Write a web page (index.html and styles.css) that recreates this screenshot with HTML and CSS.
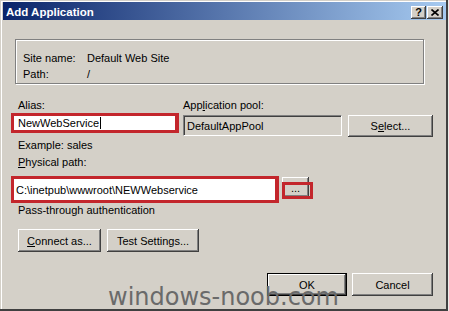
FILE: index.html
```html
<!DOCTYPE html>
<html lang="en">
<head>
  <meta charset="UTF-8">
  <title>Add Application</title>
  <link rel="stylesheet" href="styles.css">
</head>
<body>
  <div class="window">
    <div class="titlebar">
      <span class="title">Add Application</span>
      <div class="title-buttons">
        <span class="tbtn help">?</span>
        <span class="tbtn close">
          <svg width="8" height="7" viewBox="0 0 8 7"><path d="M0.5 0.5 L7.5 6.5 M7.5 0.5 L0.5 6.5" stroke="#000" stroke-width="1.6"/></svg>
        </span>
      </div>
    </div>

    <div class="content">
      <!-- Site info -->
      <div class="group">
        <div class="info">
          <span>Site name:</span><span>Default Web Site</span>
          <span>Path:</span><span>/</span>
        </div>
      </div>

      <div class="app-row">
        <div class="field">
          <div class="label">Alias:</div>
          <div class="textbox marked alias-box">NewWebService<span class="caret"></span></div>
          <div class="label hint">Example: sales</div>
        </div>
        <div class="field">
          <div class="label pool-label">App<u>l</u>ication pool:</div>
          <div class="textbox readonly">DefaultAppPool</div>
        </div>
        <button class="btn select">S<u>e</u>lect...</button>
      </div>

      <div class="label path-label"><u>P</u>hysical path:</div>
      <div class="path-row">
        <div class="textbox marked path-box">C:\inetpub\wwwroot\NEWWebservice</div>
        <button class="btn browse">...</button>
      </div>
      <div class="label pass">Pass-through authentication</div>

      <div class="btn-row">
        <button class="btn connect"><u>C</u>onnect as...</button>
        <button class="btn test">Test Settings...</button>
      </div>

      <div class="footer">
        <button class="btn ok">OK</button>
        <button class="btn cancel">Cancel</button>
      </div>
    </div>

    <div class="watermark">windows-noob.com</div>
  </div>
</body>
</html>
```

FILE: styles.css
```css
body {
  margin: 0;
  background-color: #ecebe8;
  font-family: "Liberation Sans", Arial, sans-serif;
  font-size: 11px;
  color: #000;
}
.window {
  position: relative;
  box-sizing: border-box;
  width: 448px;
  height: 311px;
  padding: 2px 0 0 3px;
  background-color: #d4d0c8;
  border-right: 2px solid #404040;
  border-bottom: 2px solid #404040;
  box-shadow: inset 1px 1px #d4d0c8, inset 2px 2px #fff;
  overflow: hidden;
}
.titlebar {
  display: flex;
  align-items: center;
  justify-content: space-between;
  height: 18px;
  padding: 0 3px;
  background: linear-gradient(to right, #0a246a, #a6caf0);
}
.title {
  color: #fff;
  font-weight: bold;
  font-size: 11.5px;
  margin-top: 1px;
}
.title-buttons {
  display: flex;
  gap: 1px;
  margin-top: 2px;
}
.tbtn {
  display: flex;
  align-items: center;
  justify-content: center;
  width: 15px;
  height: 13px;
  background-color: #d4d0c8;
  box-shadow: inset -1px -1px #404040, inset 1px 1px #fff, inset -2px -2px #808080;
  font-weight: bold;
  font-size: 11px;
}
.tbtn.close {
  width: 16px;
}
.content {
  padding: 0 13px 0 12px;
}
/* Site info group box */
.group {
  margin: 19px 9px 0 0;
  height: 43px;
  border: 1px solid #808080;
  box-shadow: inset 1px 1px #fff, 1px 1px #fff;
}
.info {
  display: grid;
  grid-template-columns: 64px auto;
  grid-auto-rows: 16px;
  align-items: center;
  padding: 10px 0 0 7px;
}
.label {
  height: 16px;
  line-height: 16px;
  padding-left: 3px;
}
.app-row {
  display: grid;
  grid-template-columns: 168px 165px 85px;
  align-items: start;
  margin-top: 13px;
}
.textbox {
  box-sizing: border-box;
  display: flex;
  align-items: center;
  background-color: #fff;
  white-space: nowrap;
}
.marked {
  border: 3px solid #c3262c;
  border-right-width: 4px;
  padding-left: 4px;
  margin-left: -4px;
}
.alias-box {
  width: 168px;
  height: 20px;
}
.caret {
  width: 1px;
  height: 12px;
  margin-left: 1px;
  background-color: #000;
}
.hint {
  margin-top: 4px;
}
.pool-label {
  padding-left: 0;
}
.readonly {
  width: 159px;
  height: 21px;
  margin-top: 2px;
  padding-left: 3px;
  background-color: #d4d0c8;
  border: 1px solid;
  border-color: #808080 #fff #fff #808080;
  box-shadow: inset 1px 1px #404040;
}
.btn {
  box-sizing: border-box;
  padding: 0;
  border: none;
  background-color: #d4d0c8;
  box-shadow: inset -1px -1px #404040, inset 1px 1px #fff, inset -2px -2px #808080;
  font-family: inherit;
  font-size: 11px;
  color: #000;
}
.select {
  width: 85px;
  height: 22px;
  margin-top: 18px;
}
.path-label {
  margin-top: 1px;
}
.path-row {
  display: flex;
  align-items: flex-start;
  margin-top: 6px;
}
.path-box {
  width: 268px;
  height: 27px;
  padding-left: 2px;
}
.browse {
  position: relative;
  width: 27px;
  height: 20px;
  margin: 1px 0 0 3px;
  line-height: 22px;
}
.browse::after {
  content: "";
  position: absolute;
  top: 5px;
  left: 0;
  width: 31px;
  height: 17px;
  box-sizing: border-box;
  border: 3px solid #c3262c;
}
.pass {
  margin-top: -1px;
}
.btn-row {
  display: flex;
  gap: 6px;
  margin-top: 11px;
  padding-left: 3px;
}
.connect {
  width: 83px;
  height: 23px;
}
.test {
  width: 92px;
  height: 23px;
}
.footer {
  display: flex;
  justify-content: flex-end;
  gap: 5px;
  margin-top: 21px;
}
.ok {
  width: 80px;
  height: 23px;
  border: 1px solid #000;
}
.cancel {
  width: 81px;
  height: 23px;
}
.watermark {
  position: absolute;
  left: 108px;
  top: 285px;
  font-family: "DejaVu Sans", sans-serif;
  font-size: 24px;
  line-height: 24px;
  color: #6a6a6a;
}
```
